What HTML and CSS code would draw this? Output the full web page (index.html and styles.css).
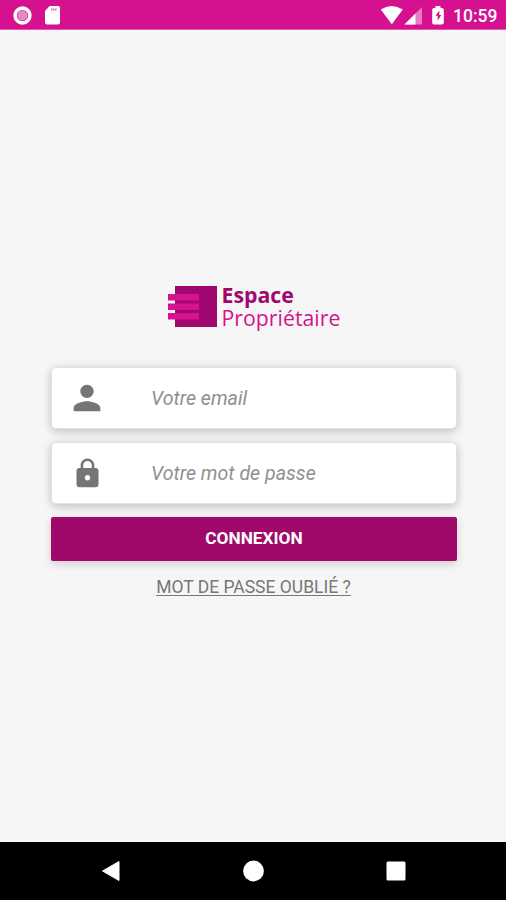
FILE: index.html
```html
<!DOCTYPE html>
<html lang="fr">
<head>
<meta charset="utf-8">
<title>Espace Propriétaire</title>
<link rel="stylesheet" href="styles.css">
</head>
<body>
<header class="status">
  <svg class="status-left" width="50" height="30" viewBox="0 0 50 30">
    <circle cx="10.5" cy="15.500" r="7.400" fill="none" stroke="#fff" stroke-width="3.600"/>
    <circle cx="10.5" cy="15.500" r="5" fill="#e58ac6"/>
    <path d="M37.600 6H46q2 0 2 2v14.500q0 2-2 2H35q-2 0-2-2V11z" fill="#fff"/>
    <path d="M39 9.500h5.500" stroke="#d8539f" stroke-width="2" stroke-dasharray="1.300 .8"/>
  </svg>
  <svg class="status-icons" width="68" height="30" viewBox="0 0 68 30">
    <path d="M.8 9.500Q11.500 2.500 22.800 9.500L11.800 24.300z" fill="#fff"/>
    <path d="M42 7v17.500H24.500z" fill="#e87bc4"/>
    <path d="M35.500 13.500v11H24.500z" fill="#fff"/>
    <path d="M55.500 6h5v2H62q1.800 0 1.800 1.800v12.900q0 1.800-1.800 1.800h-8q-1.800 0-1.800-1.800V9.800Q52.200 8 54 8h1.500z" fill="#fff"/>
    <path d="M59.500 10.500l-4 5.200h2.200v4.800l3.600-5.600h-2.200z" fill="#c51386"/>
  </svg>
  <span class="clock">10:59</span>
</header>
<main class="login">
  <div class="logo">
    <svg width="50" height="42" viewBox="0 0 50 42">
      <path d="M8 1H50V42H8z" fill="#a0086f"/>
      <path d="M1 9H32V15.500H1zM1 18.500H32V25H1zM1 28H32V34.500H1z" fill="#d6128f"/>
    </svg>
    <div class="logo-text"><strong>Espace</strong><span>Propriétaire</span></div>
  </div>
  <form class="form">
    <label class="field">
      <svg width="40" height="40" viewBox="0 0 24 24"><path fill="#757575" d="M12 12c2.210 0 4-1.790 4-4s-1.790-4-4-4-4 1.790-4 4 1.790 4 4 4zm0 2c-2.670 0-8 1.340-8 4v2h16v-2c0-2.660-5.330-4-8-4z"/></svg>
      <span class="hint email">Votre email</span>
    </label>
    <label class="field">
      <svg width="33" height="33" viewBox="0 0 24 24"><path fill="#757575" d="M18 8h-1V6c0-2.760-2.240-5-5-5S7 3.240 7 6v2H6c-1.100 0-2 .9-2 2v10c0 1.100.9 2 2 2h12c1.100 0 2-.9 2-2V10c0-1.100-.9-2-2-2zm-6 9c-1.100 0-2-.9-2-2s.9-2 2-2 2 .9 2 2-.9 2-2 2zm3.100-9H8.900V6c0-1.710 1.390-3.100 3.100-3.100s3.100 1.390 3.100 3.100v2z"/></svg>
      <span class="hint">Votre mot de passe</span>
    </label>
    <button class="submit" type="button"><span>CONNEXION</span></button>
  </form>
  <a class="forgot">MOT DE PASSE OUBLIÉ ?</a>
</main>
<nav class="navbar">
  <svg width="20" height="22" viewBox="0 0 20 22"><path d="M18 1.500v19L1.500 11z" fill="#fff" stroke="#fff" stroke-linejoin="round"/></svg>
  <svg width="22" height="22" viewBox="0 0 22 22"><circle cx="10.500" cy="11" r="10.400" fill="#fff"/></svg>
  <svg width="20" height="20" viewBox="0 0 20 20"><rect x=".5" y=".5" width="19" height="19" rx="1.500" fill="#fff"/></svg>
</nav>
</body>
</html>
```
FILE: styles.css
```css
* { box-sizing: border-box; }
body {
  margin: 0;
  height: 900px;
  display: flex;
  flex-direction: column;
  overflow: hidden;
  background: #f6f6f6;
  font-family: Roboto, sans-serif;
}
svg { display: block; flex: none; }
.status {
  flex: none;
  height: 30px;
  display: flex;
  align-items: center;
  padding: 0 9px 0 12px;
  background: #d6118f;
  border-bottom: 1px solid #e257b0;
  color: #fff;
}
.status-icons { margin-left: auto; }
.clock {
  width: 49px;
  padding: 2px 0 0 5px;
  font-size: 17.5px;
  font-weight: 500;
  line-height: 30px;
  white-space: nowrap;
}
.login {
  flex: 1;
  display: flex;
  flex-direction: column;
  align-items: center;
  padding-top: 255px;
}
.logo {
  display: flex;
  align-items: flex-start;
  gap: 5px;
  width: 173px;
  height: 82px;
}
.logo-text {
  display: flex;
  flex-direction: column;
  gap: 1px;
  margin-top: -1px;
  font-family: "Open Sans", sans-serif;
  font-size: 21.3px;
  line-height: 22px;
  color: #d6128f;
  white-space: nowrap;
}
.logo-text strong { color: #a0086f; font-weight: 700; }
.form {
  width: 406px;
  margin-left: 2px;
  display: flex;
  flex-direction: column;
  gap: 13px;
}
.field {
  height: 62px;
  display: grid;
  grid-template-columns: 70px 1fr;
  column-gap: 29px;
  align-items: center;
  border: 1px solid #e2e2e2;
  border-radius: 5px;
  background: #fff;
  box-shadow: 0 3px 8px rgba(0, 0, 0, .17), 0 0 12px rgba(0, 0, 0, .07);
}
.field svg { justify-self: center; }
.hint {
  justify-self: start;
  font-size: 19.6px;
  font-style: italic;
  color: #909090;
  white-space: nowrap;
}
.submit {
  height: 44px;
  padding: 0 0 3px;
  border: 0;
  border-radius: 2px;
  background: #a0086c;
  color: #fff;
  font: 700 17.3px/40px Roboto, sans-serif;
  box-shadow: 0 3px 8px rgba(0, 0, 0, .17);
}
.forgot {
  margin-top: 15px;
  margin-left: 1px;
  font-size: 17.5px;
  line-height: 22px;
  color: #777;
  text-decoration: underline;
  text-decoration-thickness: 1px;
  text-underline-offset: 2px;
}
.navbar {
  flex: none;
  height: 58px;
  display: flex;
  justify-content: space-between;
  align-items: center;
  padding: 0 100px 0 101px;
  background: #000;
}
```
